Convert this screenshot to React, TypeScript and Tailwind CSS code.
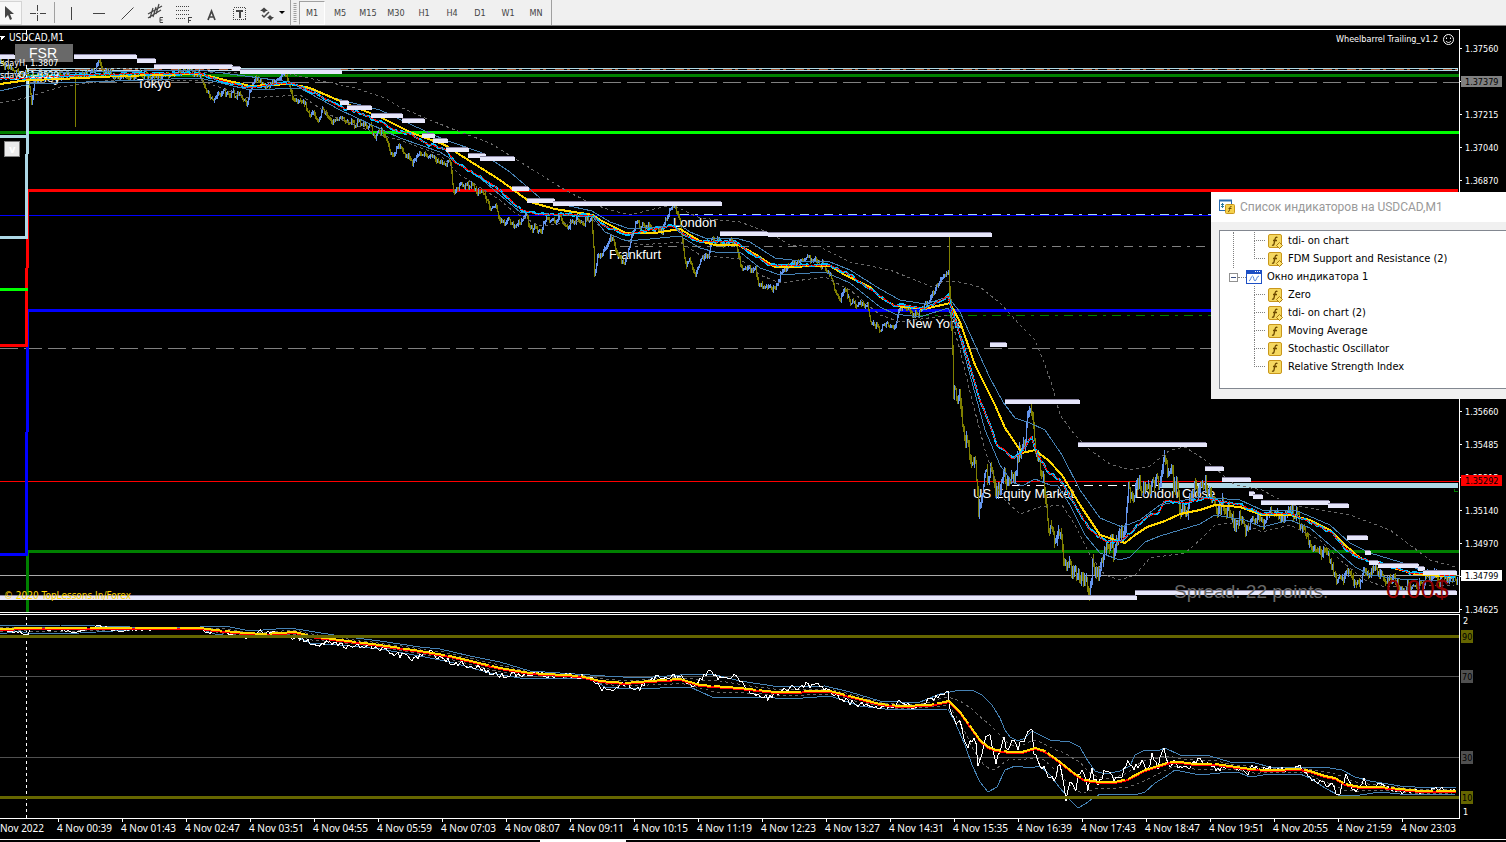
import React from "react";

type Point = [number, number];

const parse = (s: string): Point[] =>
  s.trim().split(/\s+/).map((p) => p.split(",").map(Number) as Point);

const noise = (i: number) => {
  const v = Math.sin(i * 127.1 + 11.7) * 43758.5453;
  return v - Math.floor(v);
};

const at = (pts: Point[], x: number) => {
  for (let i = 1; i < pts.length; i++) {
    if (x <= pts[i][0]) {
      const [x0, y0] = pts[i - 1];
      const [x1, y1] = pts[i];
      return y0 + ((y1 - y0) * (x - x0)) / (x1 - x0 || 1);
    }
  }
  return pts[pts.length - 1][1];
};

const price = parse(`0,62 10,68 20,72 28,76 31,104 34,82 40,75 60,76 75,74 85,76 95,68 99,60 103,70 120,76 140,74
160,76 190,70 200,74 205,88 212,101 218,92 232,93 240,94 246,101 254,80 265,84 275,82 286,74 295,103 300,97 308,110
318,119 322,108 334,124 340,117 348,122 360,124 371,128 375,135 378,128 385,136 390,150 393,152 400,145 408,158 412,164
418,155 424,152 430,157 440,161 450,161 453,190 463,185 472,184 476,194 482,191 489,205 495,207 502,222 508,220 515,226
525,215 532,229 541,230 546,218 555,220 560,216 567,228 573,220 583,222 591,220 593,250 594,272 597,255 603,252 610,235
618,255 624,262 630,240 635,222 645,225 655,230 662,232 665,220 670,208 675,206 678,215 681,232 684,258 686,266 690,260
695,273 702,255 708,260 711,240 718,240 725,243 730,238 735,245 738,255 742,270 745,265 755,270 758,287 765,284 772,290
780,275 790,265 800,258 810,260 822,263 830,275 836,291 840,298 844,288 850,302 856,303 867,304 869,318 873,322 880,328
888,322 895,326 900,306 905,305 912,312 918,316 922,305 928,305 932,292 940,280 948,270 950,300 952,340 953,385 957,400
960,395 963,430 967,445 972,460 975,462 978,508 983,485 990,465 997,498 1003,475 1012,478 1018,460 1024,435 1030,410
1035,445 1040,475 1045,490 1048,520 1055,545 1060,535 1065,570 1072,566 1080,575 1086,575 1089,590 1092,565 1096,578
1102,560 1107,540 1113,550 1118,530 1125,525 1128,485 1133,500 1140,480 1147,492 1152,478 1160,480 1163,456 1168,470
1175,480 1180,505 1187,510 1193,490 1200,488 1207,488 1213,500 1217,514 1222,507 1232,520 1240,518 1245,530 1252,518
1262,522 1270,514 1280,515 1286,510 1295,512 1300,525 1307,538 1315,548 1323,553 1330,558 1336,581 1342,575 1347,572
1353,578 1358,581 1363,570 1376,570 1385,579 1395,581 1400,584 1415,585 1425,578 1437,576 1445,581 1455,577`);

const yellowMa = parse(`0,84 28,80 60,79 120,76 200,74 250,86 290,84 310,88 340,101 380,117 412,133 445,145 465,158
500,180 530,202 555,209 593,215 600,220 626,233 655,233 680,229 700,241 715,245 738,245 755,254 775,267 830,266 845,275
870,287 880,297 895,306 925,309 950,303 960,322 975,365 995,405 1005,428 1022,453 1035,450 1048,460 1062,475 1080,505
1100,535 1125,543 1135,535 1147,527 1165,521 1180,514 1200,510 1215,505 1240,507 1262,515 1290,515 1310,520 1330,530
1345,545 1360,558 1390,567 1415,574 1455,577`);

const fastMa = parse(`0,79 28,78 60,76 120,74 200,73 215,79 250,88 280,83 295,84 320,96 340,107 360,113 380,122 395,130
412,135 425,143 447,150 455,163 480,176 500,190 520,209 535,214 560,214 593,216 602,225 626,234 650,230 672,226 685,235
700,242 715,241 735,242 770,265 830,265 850,275 880,296 895,306 905,305 925,309 948,296 955,320 965,350 980,400 990,425
997,445 1005,450 1012,459 1022,453 1031,436 1037,453 1048,472 1060,480 1075,505 1090,530 1105,541 1120,542 1130,533
1145,518 1160,511 1165,500 1185,503 1205,498 1240,505 1262,513 1290,513 1310,522 1332,533 1345,548 1360,558 1380,563
1410,573 1455,576`);

const bandUpper = `0,73 28,73 200,70 290,82 330,97 380,110 412,125 445,140 480,152 510,172 540,198 565,205 592,211
610,222 630,229 680,225 690,232 705,238 735,238 750,242 775,258 800,261 830,262 850,270 880,289 900,300 925,304 948,297
960,312 975,345 990,378 1003,402 1015,418 1030,423 1045,430 1062,455 1080,490 1100,518 1122,527 1140,520 1160,505
1200,497 1240,500 1262,510 1295,510 1330,525 1350,543 1370,553 1400,562 1420,570 1455,575`;
const bandLower = `0,91 30,84 200,78 250,90 300,88 340,110 400,138 440,152 480,178 520,212 593,217 605,232 626,241
650,239 680,236 700,248 715,252 740,252 760,268 780,275 825,272 850,283 880,307 895,314 920,317 948,308 958,330 970,375
985,430 1000,465 1012,482 1022,486 1035,479 1050,485 1058,486 1070,505 1085,535 1100,553 1120,560 1130,557 1145,542
1160,536 1200,524 1215,515 1245,520 1262,527 1290,520 1310,528 1330,545 1355,567 1370,575 1400,579 1455,582`;
const dotUpper = `60,72 100,68 140,69 200,72 290,74 355,88 385,98 400,107 425,118 455,130 490,143 530,168 565,190
590,203 610,210 630,215 650,210 672,205 700,218 740,222 770,233 790,245 820,247 850,262 890,270 920,282 932,287 942,282
955,281 980,287 1000,303 1020,325 1035,340 1045,365 1052,385 1060,415 1075,435 1090,450 1110,464 1130,470 1150,466
1170,450 1185,447 1205,460 1235,485 1262,490 1290,505 1350,515 1390,530 1410,545 1430,560 1456,567`;
const dotLower = `0,103 25,98 60,87 110,80 200,80 248,98 300,95 330,115 380,135 400,140 440,155 460,175 500,200
515,213 540,226 593,220 610,235 640,245 680,242 700,255 740,259 760,275 780,283 825,277 850,290 880,315 900,322 950,315
960,350 972,400 985,450 1000,495 1020,514 1040,507 1062,505 1075,525 1090,555 1105,575 1120,580 1135,575 1150,558
1185,553 1200,540 1215,525 1240,522 1262,532 1290,525 1320,540 1340,560 1365,580 1385,587 1455,585`;

const rsi = parse(`0,629 28,634 31,629 60,630 75,633 98,626 120,631 200,628 207,634 215,630 246,638 256,632 295,637
310,641 318,646 326,641 340,646 370,645 395,654 412,658 430,653 450,662 480,668 500,676 520,674 590,677 600,688 612,690
622,684 640,688 652,678 680,676 692,686 698,683 710,671 722,680 735,677 752,692 768,698 790,688 815,684 835,694 850,703
870,706 885,708 900,703 915,707 925,702 935,698 943,691 948,694 950,707 955,723 960,720 967,748 972,740 977,742 978,762
984,745 989,728 993,757 997,762 1000,748 1003,738 1008,750 1013,738 1018,746 1024,738 1031,724 1034,750 1037,762
1045,770 1054,778 1060,765 1066,797 1070,782 1075,790 1080,772 1084,774 1088,790 1092,772 1097,782 1108,770 1115,782
1122,776 1129,760 1135,770 1142,757 1147,770 1153,754 1157,768 1164,749 1169,768 1175,762 1182,768 1190,766 1200,757
1205,764 1215,768 1240,768 1246,775 1252,768 1290,770 1300,768 1312,780 1325,784 1332,786 1339,796 1346,775 1352,788
1358,790 1364,780 1370,786 1380,785 1400,791 1430,792 1440,789 1456,790`);

const rsiMa = parse(`0,629 28,628 200,628 215,630 245,633 265,634 295,632 310,636 340,640 380,645 420,651 450,656
500,668 530,673 580,676 600,681 625,683 650,681 680,679 700,685 740,688 775,692 830,691 880,704 900,706 930,705 949,701
960,712 970,726 980,740 988,747 996,750 1010,752 1022,752 1035,748 1045,751 1060,762 1075,774 1085,780 1100,782
1115,782 1128,779 1145,770 1158,766 1170,762 1180,762 1195,764 1215,764 1230,766 1250,769 1270,770 1300,769 1310,771
1325,776 1335,778 1345,784 1360,787 1380,787 1400,789 1420,791 1456,791`);

const rsiUpper = parse(`0,626 28,625 60,625 130,627 200,627 225,626 250,631 290,628 340,636 380,641 420,647 440,649
470,656 500,662 530,671 590,675 605,676 640,678 680,675 712,674 740,681 780,687 825,686 850,692 880,701 900,702
920,702 940,694 955,691 972,690 982,695 992,705 1000,718 1005,730 1010,737 1018,741 1025,738 1032,731 1040,735
1050,740 1070,742 1080,747 1086,758 1095,771 1105,774 1120,771 1130,766 1135,755 1145,750 1160,750 1165,748 1180,755
1210,756 1230,762 1255,763 1270,767 1300,767 1330,768 1342,770 1355,777 1370,781 1400,786 1430,788 1456,787`);

const rsiLower = parse(`0,634 20,631 30,634 80,633 130,630 200,629 215,634 245,638 295,636 310,643 340,645 380,649
420,656 450,662 490,673 520,678 590,678 605,687 630,689 660,688 690,687 712,697 760,697 790,699 830,696 860,706 885,709
900,710 948,709 955,722 965,745 972,765 980,782 988,792 997,787 1005,770 1015,766 1030,768 1040,766 1050,775 1060,788
1070,800 1078,808 1085,804 1092,799 1100,794 1130,794 1135,795 1145,792 1155,783 1165,777 1175,770 1185,772 1200,775
1230,772 1240,773 1250,777 1270,774 1300,774 1310,778 1325,788 1340,796 1360,795 1380,792 1410,795 1456,794`);

const between = (a: Point[], b: Point[]) => {
  const out: string[] = [];
  for (let x = 0; x <= 1456; x += 6) out.push(`${x},${Math.round((at(a, x) + at(b, x)) / 2)}`);
  return out.join(" ");
};

const jitter = (pts: Point[], step: number, ampAt: (x: number) => number) => {
  const out: string[] = [];
  for (let x = pts[0][0]; x <= 1456; x += step)
    out.push(`${x},${(at(pts, x) + (noise(x) - 0.5) * ampAt(x)).toFixed(1)}`);
  return out.join(" ");
};

const join = (pts: Point[]) => pts.map((p) => p.join(",")).join(" ");

const candles = (() => {
  let up = "";
  let down = "";
  let prev = price[0][1];
  for (let x = 0; x <= 1457; x++) {
    const amp = x > 950 && x < 1240 ? 22 : x >= 1240 ? 14 : 8;
    const wave = (noise(Math.floor(x / 3) + 900) - 0.5) * amp * 0.7 + (noise(x) - 0.5) * amp * 0.4;
    const next = at(price, x) + wave;
    const rising = next < prev;
    const top = Math.round(Math.min(prev, next) - noise(x + 3000) * amp * 0.25);
    const bottom = Math.round(Math.max(prev, next) + noise(x + 6000) * amp * 0.25 + 1);
    const seg = `M${x}.5 ${top}V${bottom}`;
    if (rising) up += seg;
    else down += seg;
    prev = next;
  }
  return { up, down };
})();

const levels: [number, number, number][] = [
  [0, 15, 57], [74, 137, 57], [137, 156, 61], [154, 233, 67], [232, 241, 69], [240, 342, 72], [340, 349, 103],
  [347, 372, 108], [371, 403, 116], [402, 425, 121], [422, 435, 136], [433, 448, 141], [446, 469, 150],
  [468, 486, 156], [480, 515, 159], [512, 529, 189], [527, 555, 201], [553, 722, 204], [720, 768, 234],
  [768, 992, 235], [990, 1007, 345], [1005, 1080, 402], [1078, 1207, 445], [1205, 1224, 469], [1222, 1251, 480],
  [1249, 1255, 494], [1253, 1263, 497], [1261, 1330, 503], [1328, 1349, 506], [1347, 1368, 538], [1365, 1371, 553],
  [1369, 1379, 563], [1378, 1419, 566], [1418, 1425, 569], [1423, 1457, 573], [0, 1137, 598], [1135, 1457, 593],
];

const sessions: [number, number, string][] = [
  [17, 82, "Sydney"], [137, 88, "Tokyo"], [609, 259, "Frankfurt"], [673, 227, "London"], [906, 328, "New York"],
  [973, 498, "US Equity Market"], [1135, 498, "London Close"],
];

const H = ({ x1 = 27, x2 = 1459, y, c, w = 3, d }: { x1?: number; x2?: number; y: number; c: string; w?: number; d?: string }) => (
  <path d={`M${x1} ${y}.5H${x2}`} stroke={c} strokeWidth={w} strokeDasharray={d} />
);

const Chart = () => (
  <svg viewBox="0 26 1460 793" className="block w-full" fill="none" shapeRendering="crispEdges" role="img" aria-label="USDCAD M1 price chart">
    <path d="M0 29.5H1459.5V612.5H0M0 614.5H1459.5V818.5H0" stroke="#fff" />
    <H x1={0} y={215} c="#0000ff" w={1} />
    <H x1={0} y={348} c="#808080" w={1} d="18 6" />
    <H x1={0} y={481} c="#ff0000" w={1} />
    <H x1={0} y={575} c="#a9a9a9" w={1} />
    <H y={69} c="#a0522d" w={1} d="9 3 3 9" />
    <path d="M27 68.500H1457V70.500H27" stroke="#add8e6" />
    <H y={75} c="#008000" />
    <H y={82} c="#808080" w={1} d="18 6" />
    <H x1={0} x2={27} y={132} c="#008000" />
    <H y={132} c="#00ff00" />
    <H x2={1458} y={190} c="#ff0000" />
    <H x2={1458} y={310} c="#0000ff" />
    <H y={551} c="#008000" />
    <H x1={680} y={214} c="#add8e6" w={1} d="9 6 3 6" />
    <H x1={620} y={246} c="#808080" w={1} d="9 6 3 6" />
    <H x1={920} y={315} c="#008000" w={1} d="9 6 3 6" />
    <H x1={1012} x2={1160} y={485} c="#ffffff" w={1} d="9 6 3 6" />
    <path d="M1160 485.500H1458" stroke="#add8e6" strokeWidth="5" />
    <path d="M1454.500 488.500v3h3" stroke="#008000" />
    <path d="M27.500 551V612" stroke="#008000" strokeWidth="3" />
    <path d="M27.500 310V432M26.500 432V554.500H0" stroke="#0000ff" strokeWidth="3" />
    <path d="M27.500 190V268M26.500 268V345.500H0" stroke="#ff0000" strokeWidth="3" />
    <path d="M27.500 68V154M26.500 154V237.500H0M0 136.500H27" stroke="#add8e6" strokeWidth="3" />
    <H x1={0} x2={28} y={289} c="#00ff00" />
    <path d="M26.500 30V70" stroke="#fff" strokeDasharray="4 3" />

    <g fill="#fff" fontFamily="'Liberation Sans', Arial, sans-serif" fontSize="13">
      {sessions.map(([x, y, t]) => (
        <text key={t} x={x} y={y}>{t}</text>
      ))}
    </g>

    <path d={candles.down} stroke="#808000" />
    <path d={candles.up} stroke="#6495ed" />
    <path d="M75.500 74V127M949.500 235V300" stroke="#808000" />

    <polyline points={dotUpper} stroke="#696969" strokeDasharray="3 3" />
    <polyline points={dotLower} stroke="#696969" strokeDasharray="3 3" />
    <polyline points={bandUpper} stroke="#4682b4" />
    <polyline points={bandLower} stroke="#4682b4" />
    <polyline points={join(yellowMa)} stroke="#ffd700" strokeWidth="2" />
    <polyline points={jitter(fastMa, 3, () => 3)} stroke="#00bfff" strokeWidth="2" />
    <polyline points={join(fastMa)} stroke="#ff0000" strokeDasharray="4 1" />

    {levels.map(([a, b, y]) => (
      <g key={`${a}-${y}`}>
        <path d={`M${a} ${y - 3}.5H${b - 1}`} stroke="#8d88a5" />
        <path d={`M${a} ${y}H${b}`} stroke="#e6e6fa" strokeWidth="4" />
      </g>
    ))}

    <path d="M0 36H5L1.500 40Z" fill="#fff" />
    <rect x="15" y="44" width="58" height="18" fill="#696969" />
    <g fill="#fff" fontFamily="'DejaVu Sans Condensed', 'DejaVu Sans', sans-serif" fontSize="10">
      <text x="9" y="41">USDCAD,M1</text>
      <text x="0" y="66" fontSize="9">sdayH. 1.3807</text>
      <text x="0" y="78" fontSize="9">sdayO. 1.3529</text>
      <text x="1336" y="42" fontSize="9">Wheelbarrel Trailing_v1.2</text>
      <text x="4" y="599" fill="#ffd700">© 2020 TopLessons.In/Forex</text>
    </g>
    <g shapeRendering="auto" stroke="#fff">
      <circle cx="1448.500" cy="39.500" r="5" />
      <path d="M1446 41c1.500 2 3.500 2 5 0M1446.500 37.500v1.500M1450.500 37.500v1.500" />
    </g>
    <g fontFamily="'Liberation Sans', Arial, sans-serif">
      <text x="29" y="58" fontSize="14" fill="#fff">FSR</text>
      <text x="1174" y="598" fontSize="19" fill="#696969">Spread: 22 points.</text>
      <text x="1386" y="598" fontSize="25" fill="#8b0000">0.00$</text>
    </g>
    <rect x="4.500" y="141.500" width="15" height="15" fill="#ebebeb" stroke="#808080" />
    <text x="9" y="153" fill="#fff" fontSize="10" fontWeight="bold" fontFamily="'DejaVu Sans', sans-serif">v</text>

    <path d="M26.500 617V818" stroke="#fff" strokeDasharray="3 3" />
    <H x1={0} y={676} c="#505050" w={1} />
    <H x1={0} y={757} c="#505050" w={1} />
    <polyline points={between(rsiUpper, rsiMa)} stroke="#696969" strokeDasharray="3 3" />
    <polyline points={between(rsiLower, rsiMa)} stroke="#696969" strokeDasharray="3 3" />
    <polyline points={join(rsiUpper)} stroke="#4682b4" />
    <polyline points={join(rsiLower)} stroke="#4682b4" />
    <polyline points={jitter(rsi, 2, (x) => (x < 250 ? 3 : x > 950 && x < 1180 ? 9 : 6))} stroke="#fff" />
    <polyline points={join(rsiMa)} stroke="#ff0000" strokeWidth="2" transform="translate(0 1)" />
    <polyline points={join(rsiMa)} stroke="#ffd700" strokeWidth="2" strokeDasharray="42 3" />
    <H x1={0} y={636} c="#666600" />
    <H x1={0} y={797} c="#666600" />
  </svg>
);

const prices = [
  "1.37560", "", "1.37215", "1.37040", "1.36870", "", "", "", "", "", "", "1.35660", "1.35485", "1.35315", "1.35140",
  "1.34970", "", "1.34625",
];

const PriceAxis = () => (
  <aside className="w-[46px] shrink-0 text-white">
    <div className="relative h-[586px] pt-[6px]">
      {prices.map((p, i) => (
        <div key={i} className="flex h-[33px] items-center gap-[3px]">
          <span className="h-px w-[2px] bg-white" />
          {p}
        </div>
      ))}
      <div className="absolute top-[50px] left-px flex h-[11px] w-[41px] items-center bg-[#808080] pl-1 text-black">1.37379</div>
      <div className="absolute top-[449px] left-px flex h-[11px] w-[41px] items-center bg-[#ff0000] pl-1 text-black">1.35292</div>
      <div className="absolute top-[544px] left-px flex h-[11px] w-[41px] items-center bg-white pl-1 text-black">1.34799</div>
    </div>
    <div className="flex flex-col items-start pl-px">
      <span className="flex h-[18px] items-center pl-[2px]">2</span>
      <span className="flex h-[13px] items-center bg-[#666600] px-px text-black">90</span>
      <span className="mt-[27px] flex h-[13px] items-center bg-[#505050] px-px text-black">70</span>
      <span className="mt-[68px] flex h-[13px] items-center bg-[#505050] px-px text-black">30</span>
      <span className="mt-[27px] flex h-[13px] items-center bg-[#666600] px-px text-black">10</span>
      <span className="flex h-[15px] items-center pl-[2px]">1</span>
    </div>
  </aside>
);

const times = [
  "00:39", "01:43", "02:47", "03:51", "04:55", "05:59", "07:03", "08:07", "09:11", "10:15", "11:19", "12:23", "13:27",
  "14:31", "15:35", "16:39", "17:43", "18:47", "19:51", "20:55", "21:59", "23:03",
];

const TimeAxis = () => (
  <div className="flex h-5 overflow-hidden font-['Noto_Sans',sans-serif] text-[10px] leading-3 text-white">
    <span className="w-[57px] shrink-0 pt-[3px] whitespace-nowrap">Nov 2022</span>
    {times.map((t) => (
      <span key={t} className="flex w-16 shrink-0 flex-col whitespace-nowrap">
        <span className="ml-px h-[3px] w-px bg-white" />
        4 Nov {t}
      </span>
    ))}
  </div>
);

const tools: { name: string; icon: React.ReactNode }[] = [
  { name: "Crosshair", icon: <path d="M10.500 3v6M10.500 13v6M2.500 11.500h6M12.500 11.500h6M10 11.500h1" /> },
  { name: "Vertical line", icon: <path d="M10.500 5v13" /> },
  { name: "Horizontal line", icon: <path d="M4 11.500h12" /> },
  { name: "Trendline", icon: <path d="M4.500 17.500l12-12" shapeRendering="auto" /> },
  {
    name: "Equidistant channel",
    icon: (
      <g shapeRendering="auto">
        <path d="M3 12l14-8M3 16l13-8M5 16l3-10M8 15l3-10M11 12l3-10" strokeWidth="1.200" />
        <path d="M18 15.500h-3v5h3M15 18h2.500" />
      </g>
    ),
  },
  {
    name: "Fibonacci retracement",
    icon: (
      <g>
        <path d="M3 4.500h14M3 8.500h14M3 12.500h14M3 16.500h9" strokeDasharray="1 1" />
        <path d="M15.500 21v-5.500h3M15 18.500h3" />
      </g>
    ),
  },
  { name: "Text", icon: <path d="M7 18l3.500-9 3.500 9M8.500 15h4" strokeWidth="1.700" shapeRendering="auto" /> },
  {
    name: "Text label",
    icon: (
      <g>
        <rect x="4.500" y="5.500" width="12" height="12" strokeDasharray="1 1" />
        <path d="M7 9h7M10.500 9v7" strokeWidth="2" />
      </g>
    ),
  },
  {
    name: "Arrows",
    icon: (
      <g fill="#444" stroke="none" shapeRendering="auto">
        <path d="M3 9l4-3.500 4 3.500H9l-2 2-2-2zM11 15l2-2 2 2h2l-3.500 3.500L10 15z" />
        <path d="M5 13l2 2 5-5" fill="none" stroke="#444" strokeWidth="1.500" />
      </g>
    ),
  },
];

const periods = ["M1", "M5", "M15", "M30", "H1", "H4", "D1", "W1", "MN"];

const Toolbar = () => (
  <header className="flex h-[26px] items-center border-b border-[#808080] bg-[#f0f0f0] text-[#444]">
    <button aria-label="Cursor" className="flex h-6 w-[22px] shrink-0 items-center border border-l-0 border-[#d4d4d4] bg-[#f8f8f8]">
      <svg width="20" height="20" viewBox="0 0 20 20">
        <path d="M5 3v12l3-3 2 5 2-1-2-5h4z" fill="#444" />
      </svg>
    </button>
    {tools.map(({ name, icon }, i) => (
      <React.Fragment key={name}>
        <button aria-label={name} className={i === 0 ? "ml-[5px] shrink-0" : i === 1 ? "ml-[6px] shrink-0" : "ml-[7px] shrink-0"}>
          <svg width="21" height="22" viewBox="0 0 21 22" fill="none" stroke="#444" shapeRendering="crispEdges">{icon}</svg>
        </button>
        {i === 0 && <span className="ml-[6px] h-[21px] w-px shrink-0 bg-[#a0a0a0]" />}
      </React.Fragment>
    ))}
    <svg width="6" height="4" viewBox="0 0 6 4" className="ml-px shrink-0"><path d="M0 0h6L3 3z" fill="#000" /></svg>
    <span className="ml-[5px] h-full w-px shrink-0 bg-[#a0a0a0]" />
    <svg width="4" height="20" viewBox="0 0 4 20" className="mx-[2px] shrink-0">
      <path d="M2 0v20" stroke="#a0a0a0" strokeWidth="3" strokeDasharray="1 1" />
    </svg>
    <nav aria-label="Timeframes" className="flex h-full items-center border-r border-[#a0a0a0] pr-px">
      {periods.map((p) => (
        <button
          key={p}
          className={p === "M1"
            ? "mr-px h-6 w-[26px] border border-t-[#a0a0a0] border-r-white border-b-white border-l-[#a0a0a0] bg-[#f4f4f4]"
            : "h-6 w-7"}
        >
          {p}
        </button>
      ))}
    </nav>
  </header>
);

const FunctionIcon = ({ custom }: { custom: boolean }) => (
  <svg width="15" height="15" viewBox="0 0 15 15" className="shrink-0">
    <rect x="0.500" y="0.500" width="13" height="13" rx="1.500" fill="#f5d860" stroke="#c9971c" />
    <path d="M9.500 3.500c-1.500-.8-2.200.2-2.500 2L6 10c-.3 1.300-1 1.500-2 1M5 6.500h4" fill="none" stroke="#6e4a00" strokeWidth="1.300" />
    {custom && <path d="M11.500 8.500l3 3-3 3-3-3z" fill="#ffe36b" stroke="#a87a10" />}
  </svg>
);

const Row = ({ label, custom, last }: { label: string; custom: boolean; last: boolean }) => (
  <li className="flex h-[18px] items-center">
    <span className="flex h-full w-[11px] flex-col">
      <span className="h-[9px] border-b border-l border-dotted border-[#808080]" />
      {!last && <span className="h-[9px] border-l border-dotted border-[#808080]" />}
    </span>
    <span className="ml-[3px] flex items-center gap-[5px] whitespace-nowrap">
      <FunctionIcon custom={custom} />
      {label}
    </span>
  </li>
);

const IndicatorWindow = () => (
  <section role="dialog" aria-labelledby="window-title" className="absolute top-[192px] right-0 w-[295px] bg-[#f0f0f0] pb-[10px]">
    <h2 id="window-title" className="flex h-[30px] items-center gap-[5px] bg-white pl-2 font-[Roboto,sans-serif] text-[12px] font-normal text-[#999]">
      <svg width="16" height="16" viewBox="0 0 16 16">
        <rect x="0.500" y="1.500" width="12" height="10" fill="#fff" stroke="#2b6cb0" />
        <path d="M0 1.500h13" stroke="#2b6cb0" strokeWidth="2" />
        <path d="M3.500 4v5M2 5.500h3M2 7.500h3" stroke="#2f7a99" />
        <rect x="6.500" y="5.500" width="9" height="9" rx="1" fill="#f5d14c" stroke="#c9971c" />
        <path d="M12.500 7.500c-1.500-.5-1.500.5-2 3s-.7 2-1.500 2M9.500 9.500h3" fill="none" stroke="#6e4a00" />
      </svg>
      Список индикаторов на USDCAD,M1
    </h2>
    <div className="mt-2 ml-2 h-[159px] border border-r-0 border-[#828790] bg-white pt-px text-[11px] text-black">
      <div className="ml-[13px] border-l border-dotted border-[#808080] pl-5">
        <ul>
          <Row label="tdi- on chart" custom last={false} />
          <Row label="FDM Support and Resistance (2)" custom last />
        </ul>
      </div>
      <div className="flex h-[18px] items-center pl-[9px] whitespace-nowrap">
        <button aria-label="Collapse" className="flex h-[9px] w-[9px] items-center justify-center border border-[#919191] bg-white">
          <span className="h-px w-[5px] bg-[#3b4f81]" />
        </button>
        <span className="w-2 border-t border-dotted border-[#808080]" />
        <svg width="16" height="14" viewBox="0 0 16 14" className="mr-[5px]">
          <rect x="0.500" y="0.500" width="15" height="13" fill="#fff" stroke="#1d4fc4" />
          <path d="M0 2h16" stroke="#1d4fc4" strokeWidth="4" />
          <path d="M9 1.500h5" stroke="#fff" strokeDasharray="1 1" />
          <path d="M3 11c1.500 0 2-5 3.500-5s1 5 2.500 5 1.500-5 4-5" fill="none" stroke="#4f83dd" />
        </svg>
        Окно индикатора 1
      </div>
      <ul className="pl-[34px]">
        <Row label="Zero" custom last={false} />
        <Row label="tdi- on chart (2)" custom last={false} />
        <Row label="Moving Average" custom={false} last={false} />
        <Row label="Stochastic Oscillator" custom={false} last={false} />
        <Row label="Relative Strength Index" custom={false} last />
      </ul>
    </div>
  </section>
);

export default function App() {
  return (
    <div className="relative min-h-screen overflow-hidden bg-black font-['DejaVu_Sans_Condensed','DejaVu_Sans',sans-serif] text-[9px] leading-3">
      <Toolbar />
      <main className="flex">
        <div className="min-w-0 flex-1">
          <Chart />
        </div>
        <PriceAxis />
      </main>
      <TimeAxis />
      <footer className="border-t border-white">
        <div className="ml-[540px] h-[2px] w-[86px] bg-white" />
      </footer>
      <IndicatorWindow />
    </div>
  );
}
